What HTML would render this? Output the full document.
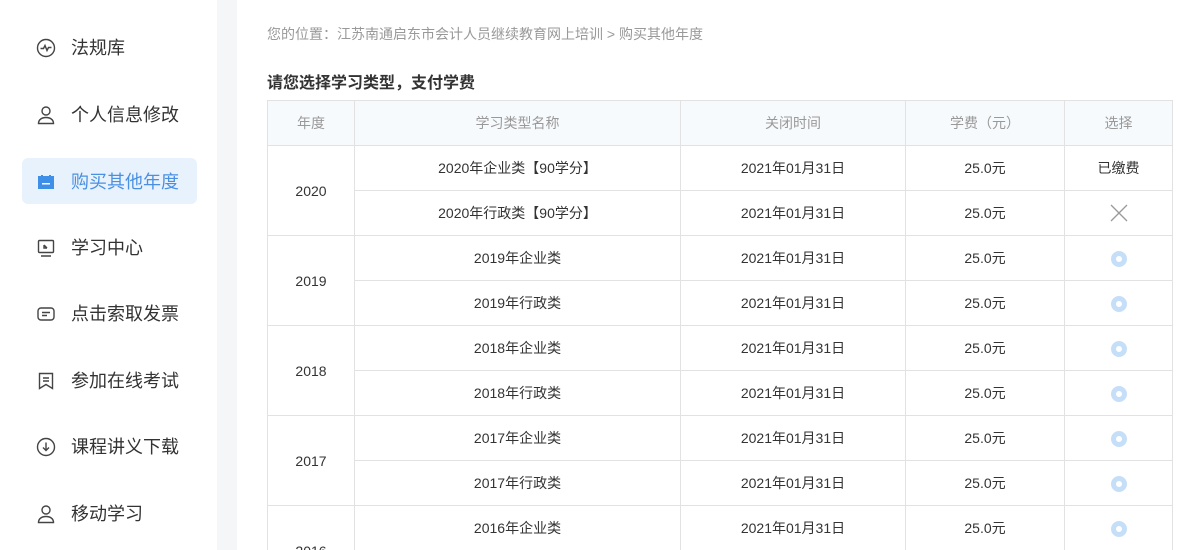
<!DOCTYPE html>
<html><head><meta charset="utf-8"><style>
*{margin:0;padding:0;box-sizing:border-box}
html,body{width:1180px;height:550px;overflow:hidden}
body{background:#fff;font-family:"Liberation Sans","Noto Sans CJK SC",sans-serif;position:relative}
.side{position:absolute;left:0;top:0;width:217px;height:550px;background:#fff}
.gap{position:absolute;left:217px;top:0;width:20px;height:550px;background:#f5f6f8}
.item{position:absolute;left:22px;width:175px;height:46px;display:flex;align-items:center;font-size:18px;color:#333}
.item svg{position:absolute;left:14px;top:14px}
.item span{position:absolute;left:49px}
.item.act{background:#e8f2fd;border-radius:6px;color:#4a90e2}
.crumb{position:absolute;left:267px;top:24px;font-size:14px;color:#999}
.title{position:absolute;left:267px;top:69px;font-size:16px;font-weight:bold;color:#333}
table{position:absolute;left:267px;top:100px;width:905px;border-collapse:collapse;table-layout:fixed}
td,th{border:1px solid #e2e2e2;height:45px;text-align:center;font-size:14px;color:#333;font-weight:normal}
th{background:#f7fafd;color:#999}
.r{display:inline-block;width:16px;height:16px;border-radius:50%;border:5px solid #c6dff8;background:#fff;vertical-align:middle}
</style></head><body>
<div class="side">
<div class="item" style="top:24px"><svg width="20" height="20" viewBox="0 0 20 20" fill="none" stroke="#444" stroke-width="1.4"><circle cx="10" cy="10" r="8.5"/><path d="M4.5 10.5h3l1.5-3 2 5 1.5-3h3"/></svg><span>法规库</span></div>
<div class="item" style="top:91px"><svg width="20" height="20" viewBox="0 0 20 20" fill="none" stroke="#444" stroke-width="1.4"><circle cx="10" cy="6" r="4"/><path d="M2.5 18.5c0-4 3.5-6 7.5-6s7.5 2 7.5 6z"/></svg><span>个人信息修改</span></div>
<div class="item act" style="top:158px"><svg width="20" height="20" viewBox="0 0 20 20"><rect x="2" y="4" width="16" height="13" fill="#3d8fe8"/><rect x="5" y="3" width="2" height="3" fill="#3d8fe8"/><rect x="13" y="3" width="2" height="3" fill="#3d8fe8"/><rect x="6" y="11" width="8" height="1.5" fill="#fff"/></svg><span>购买其他年度</span></div>
<div class="item" style="top:224px"><svg width="20" height="20" viewBox="0 0 20 20" fill="none" stroke="#444" stroke-width="1.4"><rect x="2.5" y="2.5" width="15" height="12" rx="1"/><path d="M5 18h10M8 7v3h3M8 7l3 3"/></svg><span>学习中心</span></div>
<div class="item" style="top:290px"><svg width="20" height="20" viewBox="0 0 20 20" fill="none" stroke="#444" stroke-width="1.4"><rect x="2" y="4" width="16" height="12" rx="3"/><path d="M6 8.5h8M6 11.5h5"/></svg><span>点击索取发票</span></div>
<div class="item" style="top:357px"><svg width="20" height="20" viewBox="0 0 20 20" fill="none" stroke="#444" stroke-width="1.4"><path d="M3.5 2.5h13v15l-6.5-4-6.5 4z"/><path d="M7 7h6M7 10h6"/></svg><span>参加在线考试</span></div>
<div class="item" style="top:423px"><svg width="20" height="20" viewBox="0 0 20 20" fill="none" stroke="#444" stroke-width="1.4"><circle cx="10" cy="10" r="8.5"/><path d="M10 5.5v8M7 10.5l3 3 3-3"/></svg><span>课程讲义下载</span></div>
<div class="item" style="top:490px"><svg width="20" height="20" viewBox="0 0 20 20" fill="none" stroke="#444" stroke-width="1.4"><circle cx="10" cy="6" r="4"/><path d="M2.5 18.5c0-4 3.5-6 7.5-6s7.5 2 7.5 6z"/></svg><span>移动学习</span></div>
</div>
<div class="gap"></div>
<div class="crumb">您的位置：江苏南通启东市会计人员继续教育网上培训 &gt; 购买其他年度</div>
<div class="title">请您选择学习类型，支付学费</div>
<table>
<colgroup><col style="width:87px"><col style="width:326px"><col style="width:225px"><col style="width:159px"><col style="width:108px"></colgroup>
<tr><th>年度</th><th>学习类型名称</th><th>关闭时间</th><th>学费（元）</th><th>选择</th></tr>
<tr><td rowspan="2">2020</td><td>2020年企业类【90学分】</td><td>2021年01月31日</td><td>25.0元</td><td>已缴费</td></tr>
<tr><td>2020年行政类【90学分】</td><td>2021年01月31日</td><td>25.0元</td><td><svg width="20" height="20" viewBox="0 0 20 20" style="vertical-align:middle"><path d="M2 2L18 18M18 2L2 18" stroke="#999" stroke-width="1.3"/></svg></td></tr>
<tr><td rowspan="2">2019</td><td>2019年企业类</td><td>2021年01月31日</td><td>25.0元</td><td><span class="r"></span></td></tr>
<tr><td>2019年行政类</td><td>2021年01月31日</td><td>25.0元</td><td><span class="r"></span></td></tr>
<tr><td rowspan="2">2018</td><td>2018年企业类</td><td>2021年01月31日</td><td>25.0元</td><td><span class="r"></span></td></tr>
<tr><td>2018年行政类</td><td>2021年01月31日</td><td>25.0元</td><td><span class="r"></span></td></tr>
<tr><td rowspan="2">2017</td><td>2017年企业类</td><td>2021年01月31日</td><td>25.0元</td><td><span class="r"></span></td></tr>
<tr><td>2017年行政类</td><td>2021年01月31日</td><td>25.0元</td><td><span class="r"></span></td></tr>
<tr><td rowspan="2">2016</td><td>2016年企业类</td><td>2021年01月31日</td><td>25.0元</td><td><span class="r"></span></td></tr>
<tr><td>2016年行政类</td><td>2021年01月31日</td><td>25.0元</td><td><span class="r"></span></td></tr>
</table>
</body></html>
